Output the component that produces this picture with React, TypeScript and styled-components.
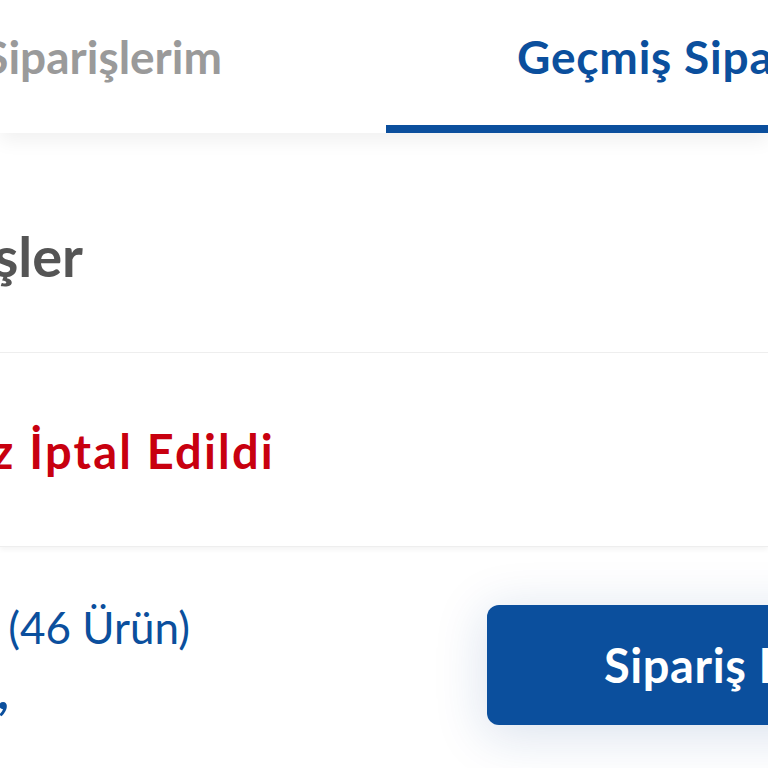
import React from "react";
import styled, { createGlobalStyle } from "styled-components";

const Global = createGlobalStyle`
  html, body { margin: 0; padding: 0; background: #ffffff; }
  body { font-family: Lato, "Noto Sans", "Liberation Sans", sans-serif; }
  * { box-sizing: border-box; }
`;

const BLUE = "#0b4f9d";

const Page = styled.div`
  width: 768px;
  height: 768px;
  overflow: hidden;
  background: #ffffff;
  display: flex;
  flex-direction: column;
`;

const TabBar = styled.div`
  display: flex;
  height: 133px;
  flex-shrink: 0;
  background: #ffffff;
  position: relative;
  z-index: 2;
  box-shadow: 0 8px 18px rgba(0, 0, 0, 0.06);
`;

const Tab = styled.div<{ $active?: boolean }>`
  display: flex;
  align-items: flex-start;
  padding-top: 34px;
  white-space: nowrap;
  font-size: 46px;
  line-height: 1;
  font-weight: 700;
  letter-spacing: ${(p) => (p.$active ? "0.8px" : "0")};
  color: ${(p) => (p.$active ? BLUE : "#9a9a9a")};
  border-bottom: 8px solid ${(p) => (p.$active ? BLUE : "transparent")};
  ${(p) =>
    p.$active
      ? `flex: 1; padding-left: 131px; min-width: 0;`
      : `width: 386px; flex-shrink: 0; justify-content: flex-end; padding-right: 164px;`}
`;

const Section = styled.div<{ $h: number; $pt: number }>`
  height: ${(p) => p.$h}px;
  flex-shrink: 0;
  padding-top: ${(p) => p.$pt}px;
  background: #ffffff;
  border-bottom: 1px solid #eeeeee;
  box-shadow: 0 3px 5px rgba(0, 0, 0, 0.045);
  position: relative;
`;

const CutLine = styled.div<{ $end: number }>`
  width: ${(p) => p.$end}px;
  display: flex;
  justify-content: flex-end;
  white-space: nowrap;
`;

const Title = styled.span`
  font-size: 56px;
  line-height: 1;
  font-weight: 700;
  color: #555555;
`;

const Status = styled.span`
  font-size: 47px;
  line-height: 1;
  font-weight: 700;
  letter-spacing: 2.2px;
  margin-right: -2px;
  color: #c8000f;
`;

const OrderCard = styled.div`
  flex: 1;
  display: flex;
  justify-content: space-between;
  align-items: flex-start;
  padding-top: 58px;
  background: #ffffff;
`;

const Info = styled.div`
  display: flex;
  flex-direction: column;
  gap: 16px;
`;

const Count = styled.span`
  font-size: 44px;
  line-height: 1;
  font-weight: 400;
  color: ${BLUE};
`;

const Price = styled.span`
  font-size: 50px;
  line-height: 1;
  font-weight: 700;
  color: ${BLUE};
`;

const DetailButton = styled.button`
  flex-shrink: 0;
  width: 560px;
  margin-right: -279px;
  height: 120px;
  border: none;
  border-radius: 12px;
  background: ${BLUE};
  color: #ffffff;
  font-family: inherit;
  font-size: 47px;
  font-weight: 700;
  letter-spacing: 0.6px;
  display: flex;
  align-items: center;
  justify-content: flex-start;
  padding: 0 0 0 117px;
  white-space: nowrap;
  box-shadow: 0 8px 50px 4px rgba(20, 70, 140, 0.15);
`;

export default function App() {
  return (
    <>
      <Global />
      <Page>
        <TabBar>
          <Tab>Aktif Siparişlerim</Tab>
          <Tab $active>Geçmiş Siparişlerim</Tab>
        </TabBar>
        <Section $h={220} $pt={95}>
          <CutLine $end={83}>
            <Title>Geçmiş Siparişler</Title>
          </CutLine>
        </Section>
        <Section $h={194} $pt={75}>
          <CutLine $end={273}>
            <Status>Siparişiniz İptal Edildi</Status>
          </CutLine>
        </Section>
        <OrderCard>
          <Info>
            <CutLine $end={190}>
              <Count>12 Mart 2024 (46 Ürün)</Count>
            </CutLine>
            <CutLine $end={9}>
              <Price>Toplam 1.249,</Price>
            </CutLine>
          </Info>
          <DetailButton>Sipariş Detayı</DetailButton>
        </OrderCard>
      </Page>
    </>
  );
}
